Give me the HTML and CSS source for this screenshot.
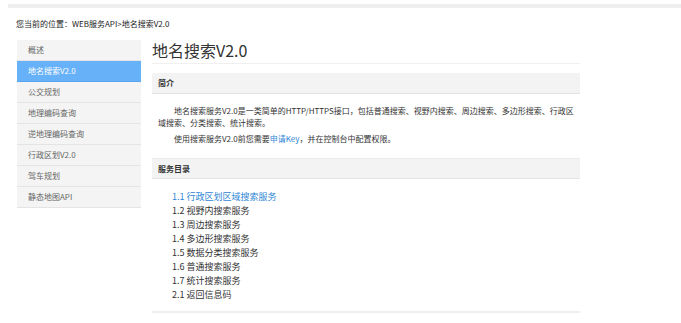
FILE: index.html
```html
<!DOCTYPE html>
<html lang="zh-CN">

<head>
  <meta charset="UTF-8">
  <meta name="viewport" content="width=device-width, initial-scale=1.0">
  <title>地名搜索V2.0</title>
  <link rel="stylesheet" href="styles.css">
</head>

<body>
  <div class="top-bar"></div>

  <div class="crumb">您当前的位置：WEB服务API&gt;地名搜索V2.0</div>

  <div class="layout">
    <ul class="side-nav">
      <li class="nav-item">概述</li>
      <li class="nav-item active">地名搜索V2.0</li>
      <li class="nav-item">公交规划</li>
      <li class="nav-item">地理编码查询</li>
      <li class="nav-item">逆地理编码查询</li>
      <li class="nav-item">行政区划V2.0</li>
      <li class="nav-item">驾车规划</li>
      <li class="nav-item">静态地图API</li>
    </ul>

    <div class="content">
      <h1 class="page-title">地名搜索V2.0</h1>

      <div class="section-head">简介</div>
      <div class="intro">
        <p>地名搜索服务V2.0是一类简单的HTTP/HTTPS接口，包括普通搜索、视野内搜索、周边搜索、多边形搜索、行政区域搜索、分类搜索、统计搜索。</p>
        <p>使用搜索服务V2.0前您需要<a class="link" href="#">申请Key</a>，并在控制台中配置权限。</p>
      </div>

      <div class="section-head second">服务目录</div>
      <ul class="toc">
        <li><a class="link" href="#">1.1 行政区划区域搜索服务</a></li>
        <li>1.2 视野内搜索服务</li>
        <li>1.3 周边搜索服务</li>
        <li>1.4 多边形搜索服务</li>
        <li>1.5 数据分类搜索服务</li>
        <li>1.6 普通搜索服务</li>
        <li>1.7 统计搜索服务</li>
        <li>2.1 返回信息码</li>
      </ul>
    </div>
  </div>
</body>

</html>
```

FILE: styles.css
```css
* {
  margin: 0;
  padding: 0;
  box-sizing: border-box;
}

body {
  font-family: 'Noto Sans CJK SC', 'Noto Sans', sans-serif;
  background: white;
  color: #333;
  font-size: 8px;
}

ul {
  list-style: none;
}

.top-bar {
  margin: 4px 0 0 8px;
  height: 4px;
  background: #eeeeee;
}

.crumb {
  padding-left: 16px;
  margin-top: 10px;
  line-height: 12px;
  color: #222;
}

.layout {
  display: flex;
  gap: 11px;
  margin-top: 10px;
  padding-left: 17px;
}

.side-nav {
  width: 124px;
  flex-shrink: 0;
  align-self: flex-start;
  background: #f4f4f4;
}

.nav-item {
  height: 21px;
  line-height: 20px;
  padding-left: 11px;
  color: #666;
  border-bottom: 1px solid #e4e4e4;
}

.nav-item.active {
  background: #66b1f8;
  color: white;
  border-bottom-color: #5aa6ee;
}

.content {
  width: 428px;
}

.page-title {
  font-size: 16px;
  font-weight: normal;
  color: #333;
  height: 24px;
  line-height: 20px;
  border-bottom: 1px solid #f0f0f0;
}

.section-head {
  margin-top: 9px;
  height: 21px;
  line-height: 20px;
  padding-left: 6px;
  background: #f3f3f3;
  border-bottom: 1px solid #e2e2e2;
  font-weight: bold;
  color: #333;
}

.section-head.second {
  margin-top: 0;
  height: 21px;
  border-top: 1px solid #ececec;
}

.intro {
  padding: 11px 6px 9px;
  line-height: 12px;
}

.intro p {
  text-indent: 16px;
  margin-bottom: 4px;
}

.link {
  color: #2f86d6;
  text-decoration: none;
}

.toc {
  padding: 11px 0 9px 20px;
  font-size: 9px;
  line-height: 14px;
  border-bottom: 2px solid #eeeeee;
}
```
